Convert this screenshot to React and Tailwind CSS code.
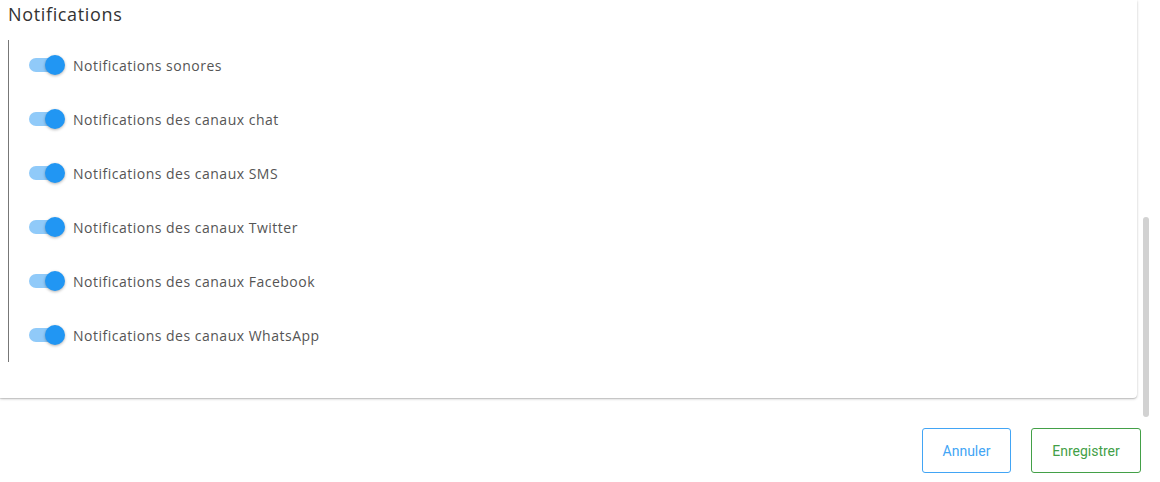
import React from 'react';

const channels = [
    'Notifications sonores',
    'Notifications des canaux chat',
    'Notifications des canaux SMS',
    'Notifications des canaux Twitter',
    'Notifications des canaux Facebook',
    'Notifications des canaux WhatsApp',
];

function Toggle() {
    return (
        <div className="relative w-[36px] h-[20px] flex items-center shrink-0">
            <div className="w-[34px] h-[14px] rounded-full bg-[#90caf9]"></div>
            <div className="absolute right-0 w-[20px] h-[20px] rounded-full bg-[#2196f3] shadow-[0_1px_3px_rgba(0,0,0,0.3)]"></div>
        </div>
    );
}

export default function App() {
    return (
        <div className="w-[1160px] h-[482px] bg-white overflow-hidden flex font-['Open_Sans',sans-serif]">
            <div className="w-[1141px] flex flex-col">
                {/* Card */}
                <div className="w-[1137px] h-[398px] bg-white rounded-br-[4px] shadow-[0_1px_3px_rgba(0,0,0,0.2),0_1px_1px_rgba(0,0,0,0.12)] pl-[8px] pt-[2px]">
                    <h2 className="text-[18px] leading-[24px] text-[#333] tracking-[0.65px]">Notifications</h2>
                    <div className="mt-[14px] border-l border-[#777] h-[322px] pl-[20px] pt-[15px] flex flex-col gap-[34px]">
                        {channels.map((label) => (
                            <div key={label} className="flex items-center gap-[8px] h-[20px]">
                                <Toggle />
                                <span className="text-[14px] text-[#555] tracking-[0.5px]">{label}</span>
                            </div>
                        ))}
                    </div>
                </div>

                {/* Footer Actions */}
                <div className="flex justify-end gap-[20px] mt-[30px] font-['Roboto',sans-serif]">
                    <button className="w-[89px] h-[45px] border border-[#42a5f5] rounded-[3px] text-[#42a5f5] text-[14px] pt-px">
                        Annuler
                    </button>
                    <button className="w-[110px] h-[45px] border border-[#43a047] rounded-[3px] text-[#43a047] text-[14px] pt-px">
                        Enregistrer
                    </button>
                </div>
            </div>

            {/* Scrollbar */}
            <div className="flex-1 flex justify-start pl-[2px]">
                <div className="mt-[217px] w-[6px] h-[200px] rounded-full bg-[#d2d2d2]"></div>
            </div>
        </div>
    );
}
